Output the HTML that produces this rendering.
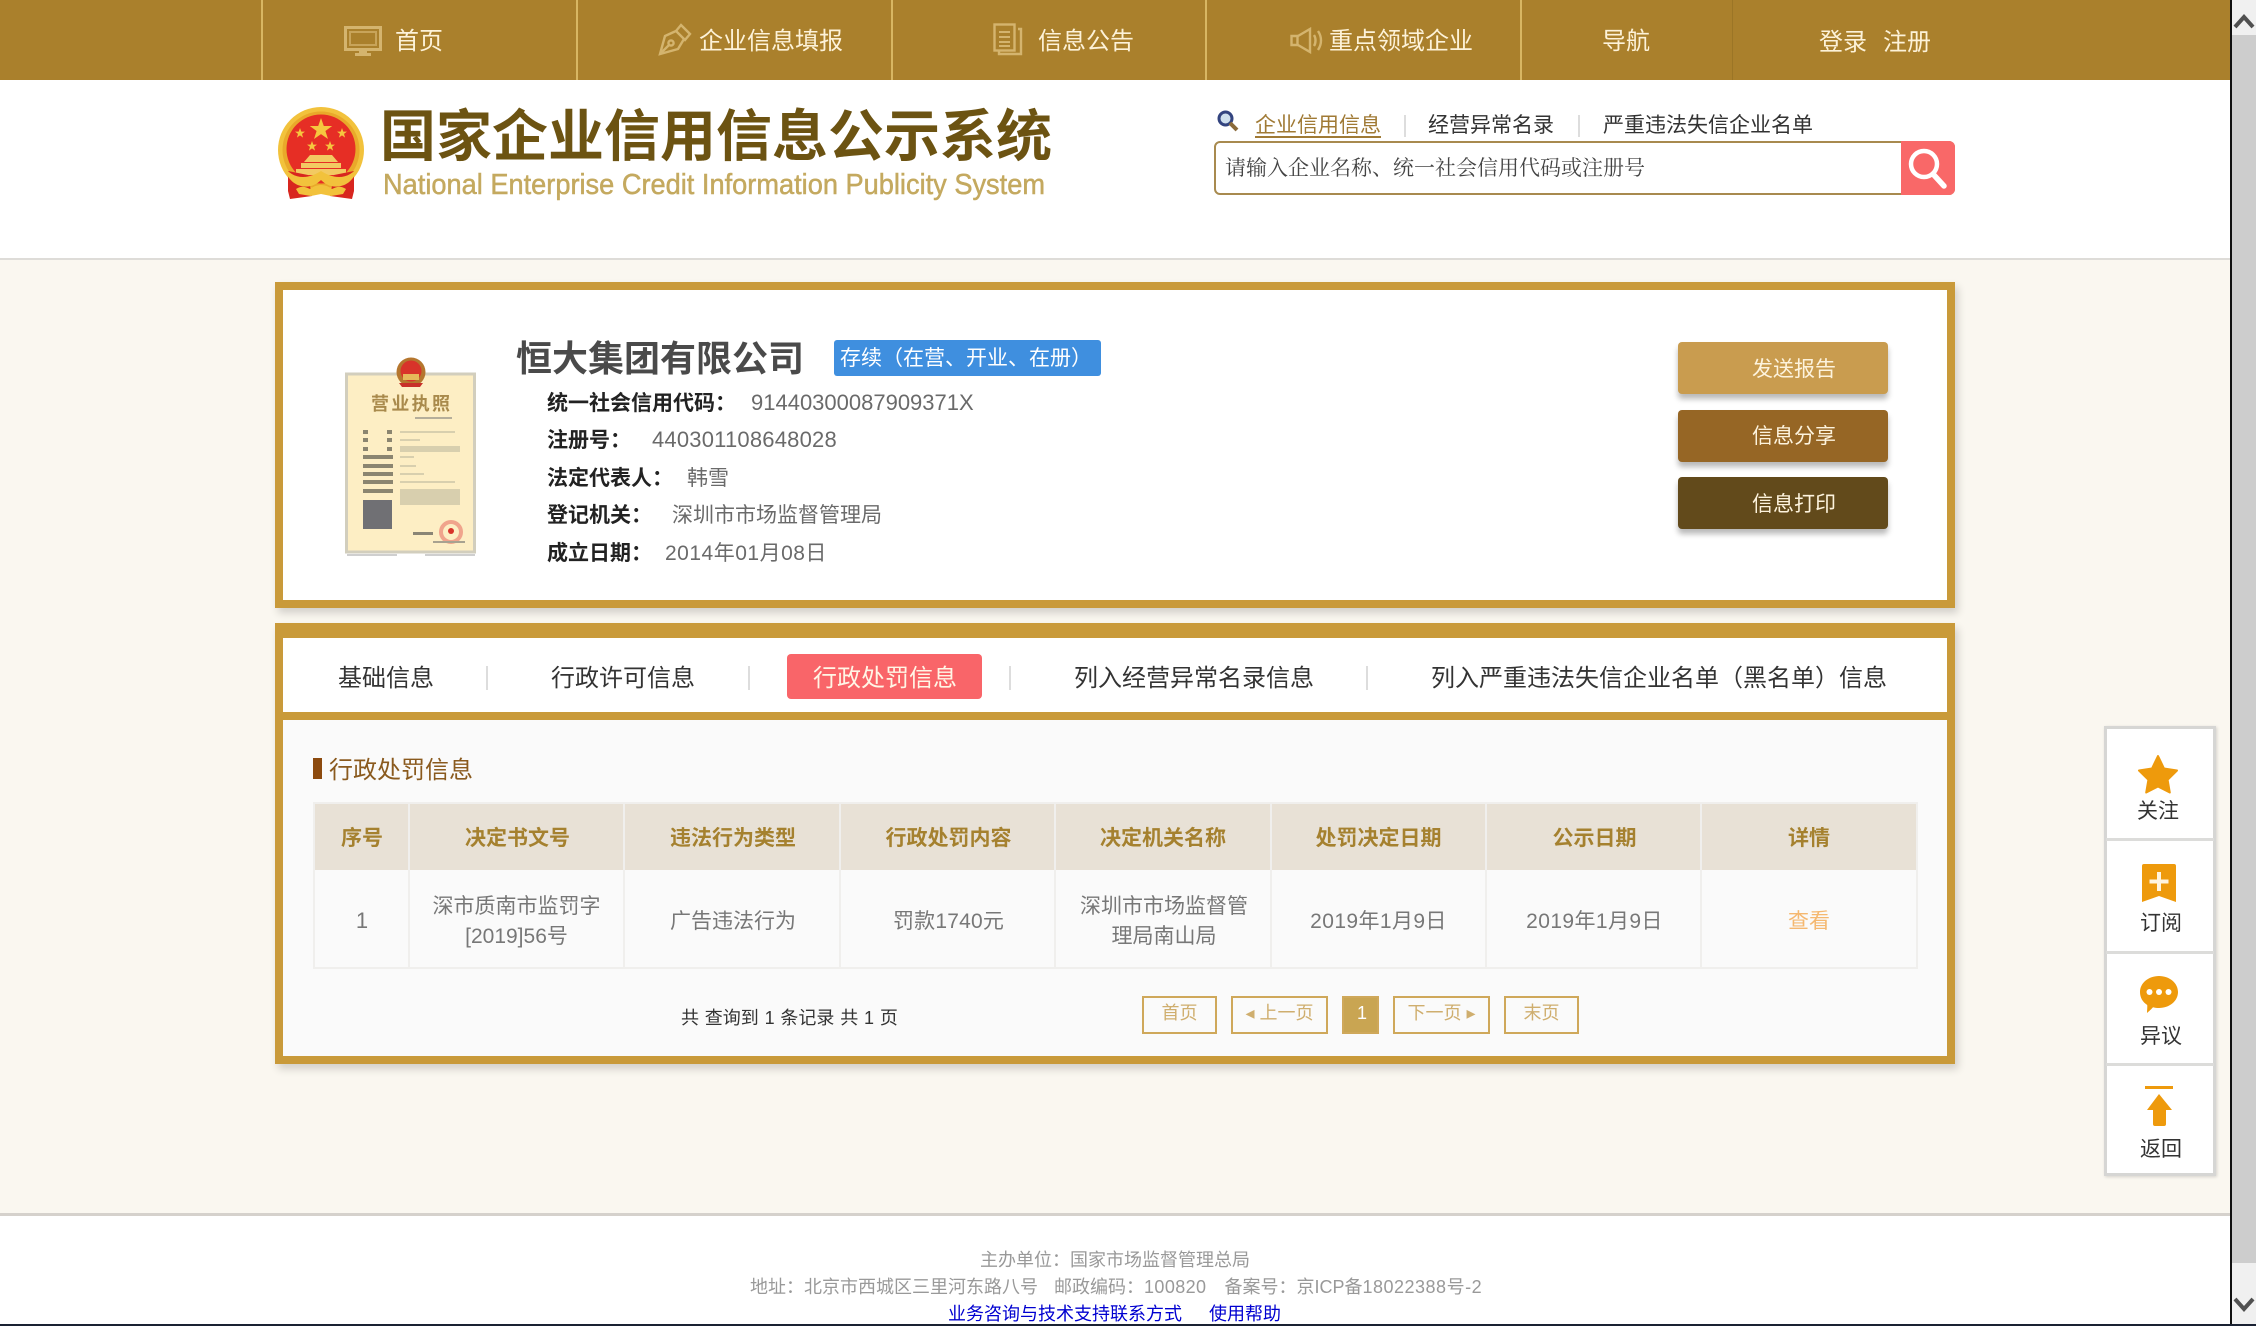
<!DOCTYPE html>
<html lang="zh-CN">
<head>
<meta charset="utf-8">
<title>国家企业信用信息公示系统</title>
<style>
html,body{margin:0;padding:0;width:2256px;height:1326px;overflow:hidden;background:#faf7f0}
body{position:relative;font-family:"Liberation Sans","Noto Sans CJK SC",sans-serif;color:#333}
div,span,svg,a{box-sizing:border-box}
.a{position:absolute}
.t{position:absolute;white-space:nowrap;line-height:1}
.c{position:absolute;text-align:center;white-space:nowrap;line-height:1}
.v{background:#d8b662;position:absolute;top:0;width:2px;height:80px}
.s{position:absolute;background:#ddd;width:2px}
.lb{font-weight:700;color:#222;font-size:21px}
.val{color:#6a6a6a;font-size:21px}
.num{font-size:22px}
.th{font-weight:700;color:#a5812f;font-size:21px}
.td{color:#777;font-size:21px}
.cell{position:absolute;background:#e8e1d6;top:804px;height:66px}
.cellb{position:absolute;top:870px;height:98px;border-left:2px solid #f0efed}
.pg{position:absolute;top:996px;height:38px;border:2px solid #cfa85a;color:#cfae6e;font-size:18px;text-align:center;line-height:30px;white-space:nowrap}
.btn{position:absolute;left:1678px;width:210px;height:52px;border-radius:4px;box-shadow:0 5px 6px rgba(0,0,0,.28)}
.btn span{position:absolute;left:74px;top:16px;font-size:21px;line-height:21px;color:#fdf3dd;white-space:nowrap}
</style>
</head>
<body>

<!-- nav -->
<div class="a" style="left:0;top:0;width:2231px;height:80px;background:#aa802c"></div>
<div class="v" style="left:261px"></div>
<div class="v" style="left:576px"></div>
<div class="v" style="left:891px"></div>
<div class="v" style="left:1205px"></div>
<div class="v" style="left:1520px"></div>
<div class="v" style="left:1732px;background:#9b7526;width:1px"></div>

<svg class="a" style="left:344px;top:26px" width="38" height="31" viewBox="0 0 38 31" fill="none"><rect x="1.500" y="1.500" width="35" height="22" fill="none" stroke="#d4b46e" stroke-width="3"/><rect x="6" y="6" width="26" height="13" fill="none" stroke="#d4b46e" stroke-width="2" opacity=".7"/><rect x="15" y="24" width="8" height="3" fill="#d4b46e"/><rect x="11" y="27" width="16" height="3" fill="#d4b46e"/></svg>
<svg class="a" style="left:658px;top:23px" width="34" height="33" viewBox="0 0 34 33" fill="none" stroke="#d4b46e" stroke-width="2.400"><path d="M23 2l9 9-5 6-9-9z"/><path d="M18 8L7 13 2 31l18-5 6-10"/><path d="M2 31l9-9"/><circle cx="13" cy="20" r="2.600"/></svg>
<svg class="a" style="left:993px;top:23px" width="30" height="33" viewBox="0 0 30 33" fill="none" stroke="#d4b46e" stroke-width="2.400"><rect x="1.500" y="1.500" width="20" height="26"/><path d="M25 6h3v25H6v-3"/><path d="M6 9h11M6 14h11M6 19h11M6 23h11" stroke-width="2"/></svg>
<svg class="a" style="left:1290px;top:27px" width="34" height="27" viewBox="0 0 34 27" fill="none" stroke="#d4b46e" stroke-width="2.400"><path d="M1.500 9h6v9h-6z"/><path d="M8 9l12-7v23L8 18"/><path d="M24 8c2 3 2 8 0 11M28 4c4 6 4 13 0 19" /></svg>

<div class="t" style="left:395px;top:30px;font-size:24px;color:#fdf2d8">首页</div>
<div class="t" style="left:699px;top:30px;font-size:24px;color:#fdf2d8">企业信息填报</div>
<div class="t" style="left:1038px;top:30px;font-size:24px;color:#fdf2d8">信息公告</div>
<div class="t" style="left:1329px;top:30px;font-size:24px;color:#fdf2d8">重点领域企业</div>
<div class="t" style="left:1602px;top:30px;font-size:24px;color:#fdf2d8">导航</div>
<div class="t" style="left:1819px;top:31px;font-size:24px;color:#fdf2d8">登录</div>
<div class="t" style="left:1883px;top:31px;font-size:24px;color:#fdf2d8">注册</div>

<!-- header -->
<div class="a" style="left:0;top:80px;width:2231px;height:178px;background:#fff"></div>
<div class="a" style="left:0;top:258px;width:2231px;height:2px;background:#dedcd8"></div>

<!-- emblem -->
<svg class="a" style="left:276px;top:105px" width="92" height="96" viewBox="0 0 92 96">
  <circle cx="45" cy="45" r="43" fill="#f2c23c"/>
  <circle cx="45" cy="45" r="38.500" fill="#e9a92a"/>
  <circle cx="45" cy="44" r="34.500" fill="#e62e25"/>
  <path d="M45 13l2.800 8h8.400l-6.800 5 2.600 8-7-4.900-7 4.900 2.600-8-6.800-5h8.400z" fill="#f6c63f"/>
  <path d="M24 23l1.300 3.600h3.700l-3 2.300 1.100 3.700-3.100-2.200-3.100 2.200 1.100-3.700-3-2.300h3.700zM66 23l1.300 3.600h3.700l-3 2.300 1.100 3.700-3.100-2.200-3.100 2.200 1.100-3.700-3-2.300h3.700zM36 36l1.300 3.600h3.700l-3 2.300 1.100 3.700-3.100-2.200-3.100 2.200 1.100-3.700-3-2.300h3.700zM54 36l1.300 3.600h3.700l-3 2.300 1.100 3.700-3.100-2.200-3.100 2.200 1.100-3.700-3-2.300h3.700z" fill="#f6c63f"/>
  <path d="M34 50h22l6 7H28zM25 58h40v5H25zM20 64h50v6H20z" fill="#f3ca62"/>
  <path d="M12 66l20 4 4 21-22 3-2-8z" fill="#d8261f"/>
  <path d="M78 66l-20 4-4 21 22 3 2-8z" fill="#d8261f"/>
  <path d="M7 60c5 8 12 12 20 12 7 0 13-3 18-6 5 3 11 6 18 6 8 0 15-4 20-12-3 11-9 19-18 21-8 2-15-1-20-6-5 5-12 8-20 6-9-2-15-10-18-21z" fill="#f2c23c"/>
  <path d="M20 84c6-4 10-2 14 0 4-3 8-4 11-4s7 1 11 4c4-2 8-4 14 0l-3 5-12 2-10-2-10 2-12-2z" fill="#f2c23c"/>
</svg>

<div class="t" style="left:380px;top:109px;font-size:56px;font-weight:700;color:#6c5312">国家企业信用信息公示系统</div>
<svg class="a" style="left:383px;top:166px" width="670" height="40"><text x="0" y="28" textLength="662" lengthAdjust="spacingAndGlyphs" font-family="Liberation Sans" font-size="29" fill="#c4a95f" stroke="#c4a95f" stroke-width=".5">National Enterprise Credit Information Publicity System</text></svg>

<!-- search tabs -->
<svg class="a" style="left:1217px;top:110px" width="22" height="22" viewBox="0 0 22 22"><circle cx="8.500" cy="8.500" r="6.500" fill="#cfe0ee" stroke="#33447f" stroke-width="3"/><path d="M13 13l7 7" stroke="#8a6a3a" stroke-width="4"/></svg>
<div class="t" style="left:1255px;top:115px;font-size:21px;color:#a07a35;padding-bottom:1px;border-bottom:2px solid #a07a35;height:23px">企业信用信息</div>
<div class="s" style="left:1404px;top:115px;height:22px"></div>
<div class="t" style="left:1428px;top:115px;font-size:21px;color:#333">经营异常名录</div>
<div class="s" style="left:1578px;top:115px;height:22px"></div>
<div class="t" style="left:1603px;top:115px;font-size:21px;color:#333">严重违法失信企业名单</div>

<!-- search box -->
<div class="a" style="left:1214px;top:141px;width:741px;height:54px;border:2px solid #a88a4f;border-radius:6px;background:#fff"></div>
<div class="t" style="left:1225px;top:158px;font-size:21px;color:#444;font-family:'Liberation Serif','Noto Serif CJK SC',serif">请输入企业名称、统一社会信用代码或注册号</div>
<div class="a" style="left:1901px;top:141px;width:54px;height:54px;background:#f96868;border-radius:0 6px 6px 0"></div>
<svg class="a" style="left:1904px;top:145px" width="46" height="46" viewBox="0 0 46 46" fill="none" stroke="#fff"><circle cx="20" cy="19" r="13" stroke-width="4.500"/><path d="M29 29l11 12" stroke-width="5.500" stroke-linecap="round"/></svg>

<!-- card 1 -->
<div class="a" style="left:275px;top:282px;width:1680px;height:326px;background:#fff;border:8px solid #c99a3a;box-shadow:3px 5px 8px rgba(0,0,0,.16)"></div>

<!-- licence -->
<svg class="a" style="left:345px;top:355px" width="132" height="205" viewBox="0 0 132 205">
  <rect x="1.500" y="19" width="128" height="178" fill="#fdeec4" stroke="#d2cebd" stroke-width="3"/>
  <circle cx="66" cy="17" r="14.500" fill="#b5762e"/>
  <circle cx="66" cy="16" r="10.500" fill="#d8332a"/>
  <rect x="58" y="19" width="16" height="6" fill="#e6b85a"/>
  <path d="M54 28h24l-3 4H57z" fill="#c8302a"/>
  <text x="26" y="55" font-family="Noto Sans CJK SC" font-weight="700" font-size="18" fill="#a98a4c" textLength="79">营业执照</text>
  <rect x="70" y="62" width="37" height="2" fill="#b5ae9a"/>
  <g fill="#8b8570">
    <rect x="18" y="75" width="5" height="4"/><rect x="42" y="75" width="5" height="4"/>
    <rect x="18" y="83" width="5" height="4"/><rect x="42" y="83" width="5" height="4"/>
    <rect x="18" y="92" width="5" height="4"/><rect x="42" y="92" width="5" height="4"/>
    <rect x="18" y="100" width="30" height="4"/>
    <rect x="18" y="109" width="30" height="4"/>
    <rect x="18" y="117" width="30" height="4"/>
    <rect x="18" y="125" width="30" height="4"/>
    <rect x="18" y="134" width="30" height="4"/>
  </g>
  <g fill="#d8cfae">
    <rect x="55" y="76" width="55" height="2"/><rect x="55" y="84" width="20" height="2"/><rect x="55" y="91" width="60" height="6"/>
    <rect x="55" y="101" width="14" height="2"/><rect x="55" y="110" width="16" height="2"/><rect x="55" y="118" width="24" height="2"/>
    <rect x="55" y="126" width="55" height="2"/><rect x="55" y="134" width="60" height="16"/>
  </g>
  <rect x="18" y="145" width="29" height="29" fill="#707074"/>
  <circle cx="106" cy="177" r="10" fill="none" stroke="#f0a48c" stroke-width="4"/>
  <circle cx="106" cy="176" r="3" fill="#d8332a"/>
  <rect x="68" y="177" width="20" height="3" fill="#8a8575"/>
  <rect x="88" y="186" width="32" height="2" fill="#a8a290"/>
  <rect x="2" y="199" width="50" height="2" fill="#cfcfcf"/>
  <rect x="80" y="199" width="50" height="2" fill="#cfcfcf"/>
</svg>

<!-- company -->
<div class="t" style="left:516px;top:341px;font-size:36px;font-weight:700;color:#4a4a4a">恒大集团有限公司</div>
<div class="a" style="left:834px;top:340px;width:267px;height:36px;background:#3f8fdf;border-radius:3px"></div>
<div class="t" style="left:840px;top:348px;font-size:21px;color:#fff">存续（在营、开业、在册）</div>

<div class="t lb" style="left:547px;top:393px">统一社会信用代码：</div>
<div class="t val num" style="left:751px;top:392px">91440300087909371X</div>
<div class="t lb" style="left:547px;top:430px">注册号：</div>
<div class="t val num" style="left:652px;top:429px;letter-spacing:.2px">440301108648028</div>
<div class="t lb" style="left:547px;top:468px">法定代表人：</div>
<div class="t val" style="left:687px;top:468px">韩雪</div>
<div class="t lb" style="left:547px;top:505px">登记机关：</div>
<div class="t val" style="left:672px;top:505px">深圳市市场监督管理局</div>
<div class="t lb" style="left:547px;top:543px">成立日期：</div>
<div class="t val" style="left:665px;top:543px;letter-spacing:.5px">2014年01月08日</div>

<!-- buttons -->
<div class="btn" style="top:342px;background:#c99c4f"><span style="top:17px">发送报告</span></div>
<div class="btn" style="top:410px;background:#966625"><span>信息分享</span></div>
<div class="btn" style="top:477px;background:#624a1b"><span style="top:17px">信息打印</span></div>

<!-- card 2 -->
<div class="a" style="left:275px;top:623px;width:1680px;height:441px;background:#c99a3a;box-shadow:3px 5px 8px rgba(0,0,0,.16)"></div>
<div class="a" style="left:283px;top:638px;width:1664px;height:74px;background:#fff"></div>
<div class="a" style="left:283px;top:720px;width:1664px;height:336px;background:#fafafa"></div>

<!-- tabs -->
<div class="t" style="left:338px;top:667px;font-size:24px;color:#333">基础信息</div>
<div class="s" style="left:486px;top:666px;height:24px"></div>
<div class="t" style="left:551px;top:667px;font-size:24px;color:#333">行政许可信息</div>
<div class="s" style="left:748px;top:666px;height:24px"></div>
<div class="a" style="left:787px;top:654px;width:195px;height:45px;background:#f96569;border-radius:4px"></div>
<div class="t" style="left:813px;top:667px;font-size:24px;color:#fff6e6">行政处罚信息</div>
<div class="s" style="left:1009px;top:666px;height:24px"></div>
<div class="t" style="left:1074px;top:667px;font-size:24px;color:#333">列入经营异常名录信息</div>
<div class="s" style="left:1366px;top:666px;height:24px"></div>
<div class="t" style="left:1431px;top:667px;font-size:24px;color:#333">列入严重违法失信企业名单（黑名单）信息</div>

<!-- section title -->
<div class="a" style="left:313px;top:758px;width:9px;height:21px;background:#8c4a0e"></div>
<div class="t" style="left:329px;top:759px;font-size:24px;color:#8a5a1e">行政处罚信息</div>

<!-- table -->
<div class="a" style="left:313px;top:802px;width:1605px;height:167px;background:#f0efed"></div>
<div class="a" style="left:315px;top:870px;width:1601px;height:97px;background:#fafafa"></div>
<div class="cell" style="left:315px;width:93px"></div>
<div class="cell" style="left:410px;width:213px"></div>
<div class="cell" style="left:625px;width:214px"></div>
<div class="cell" style="left:841px;width:213px"></div>
<div class="cell" style="left:1056px;width:214px"></div>
<div class="cell" style="left:1272px;width:213px"></div>
<div class="cell" style="left:1487px;width:213px"></div>
<div class="cell" style="left:1702px;width:214px"></div>
<div class="cellb" style="left:408px"></div>
<div class="cellb" style="left:623px"></div>
<div class="cellb" style="left:839px"></div>
<div class="cellb" style="left:1054px"></div>
<div class="cellb" style="left:1270px"></div>
<div class="cellb" style="left:1485px"></div>
<div class="cellb" style="left:1700px"></div>

<div class="c th" style="left:315px;width:94px;top:828px">序号</div>
<div class="c th" style="left:411px;width:213px;top:828px">决定书文号</div>
<div class="c th" style="left:626px;width:214px;top:828px">违法行为类型</div>
<div class="c th" style="left:842px;width:213px;top:828px">行政处罚内容</div>
<div class="c th" style="left:1056px;width:214px;top:828px">决定机关名称</div>
<div class="c th" style="left:1272px;width:213px;top:828px">处罚决定日期</div>
<div class="c th" style="left:1488px;width:213px;top:828px">公示日期</div>
<div class="c th" style="left:1703px;width:212px;top:828px">详情</div>

<div class="c td" style="left:315px;width:94px;top:910px;font-size:22px">1</div>
<div class="c td" style="left:410px;width:213px;top:896px">深市质南市监罚字</div>
<div class="c td" style="left:410px;width:213px;top:926px">[2019]56号</div>
<div class="c td" style="left:626px;width:214px;top:911px">广告违法行为</div>
<div class="c td" style="left:842px;width:213px;top:911px;letter-spacing:.2px">罚款1740元</div>
<div class="c td" style="left:1057px;width:214px;top:896px">深圳市市场监督管</div>
<div class="c td" style="left:1057px;width:214px;top:926px">理局南山局</div>
<div class="c td" style="left:1272px;width:213px;top:911px;letter-spacing:.4px">2019年1月9日</div>
<div class="c td" style="left:1488px;width:213px;top:911px;letter-spacing:.4px">2019年1月9日</div>
<div class="c td" style="left:1703px;width:212px;top:911px;color:#f5b870">查看</div>

<!-- pagination -->
<div class="t" style="left:681px;top:1009px;font-size:18px;color:#333;word-spacing:.8px">共 查询到 1 条记录 共 1 页</div>
<div class="pg" style="left:1142px;width:75px">首页</div>
<div class="pg" style="left:1231px;width:97px">&#9666; 上一页</div>
<div class="pg" style="left:1342px;width:37px;background:#c9a552;color:#fff;padding-left:3px">1</div>
<div class="pg" style="left:1393px;width:97px">下一页 &#9656;</div>
<div class="pg" style="left:1504px;width:75px">末页</div>

<!-- side panel -->
<div class="a" style="left:2104px;top:726px;width:112px;height:450px;background:#fff;border:3px solid #d6d6d4;box-shadow:1px 1px 3px rgba(0,0,0,.15)"></div>
<div class="a" style="left:2106px;top:838px;width:108px;height:3px;background:#dcdcda"></div>
<div class="a" style="left:2106px;top:951px;width:108px;height:3px;background:#dcdcda"></div>
<div class="a" style="left:2106px;top:1063px;width:108px;height:3px;background:#dcdcda"></div>

<svg class="a" style="left:2137px;top:754px" width="42" height="40" viewBox="0 0 42 40"><path d="M21 2l6 12.500 13 2-9.400 9.300 2.200 12.700L21 32.500 9.200 38.500l2.200-12.700L2 16.500l13-2z" fill="#ee9a0c" stroke="#ee9a0c" stroke-width="2" stroke-linejoin="round"/></svg>
<div class="t" style="left:2137px;top:801px;font-size:21px;color:#333">关注</div>

<svg class="a" style="left:2142px;top:864px" width="34" height="38" viewBox="0 0 34 38"><path d="M2 0h30a2 2 0 0 1 2 2v36l-17-6-17 6V2a2 2 0 0 1 2-2z" fill="#ee9a0c"/><path d="M17 8v19M7.500 17.500h19" stroke="#fff4df" stroke-width="4"/></svg>
<div class="t" style="left:2140px;top:913px;font-size:21px;color:#333">订阅</div>

<svg class="a" style="left:2139px;top:975px" width="40" height="39" viewBox="0 0 40 39"><path d="M20 1c10.500 0 19 7 19 16s-8.500 16-19 16c-2 0-4-.3-6-.8C11.500 35 9 37 8 38c0-3 .5-6 .2-8C3.600 27 1 22.500 1 17 1 8 9.500 1 20 1z" fill="#ee9a0c"/><circle cx="10.500" cy="17" r="3" fill="#fff"/><circle cx="20" cy="17" r="3" fill="#fff"/><circle cx="29.500" cy="17" r="3" fill="#fff"/></svg>
<div class="t" style="left:2140px;top:1026px;font-size:21px;color:#333">异议</div>

<svg class="a" style="left:2145px;top:1086px" width="30" height="42" viewBox="0 0 30 42"><rect x="0" y="0" width="28" height="3" fill="#ee9a0c"/><path d="M14 8l13 16h-6v14a2 2 0 0 1-2 2h-9a2 2 0 0 1-2-2V24H2z" fill="#ee9a0c"/></svg>
<div class="t" style="left:2140px;top:1139px;font-size:21px;color:#333">返回</div>

<!-- footer -->
<div class="a" style="left:0;top:1213px;width:2231px;height:113px;background:#fff;border-top:3px solid #d5d1cc"></div>
<div class="c" style="left:0;width:2230px;top:1251px;font-size:18px;color:#999">主办单位：国家市场监督管理总局</div>
<div class="t" style="left:750px;top:1278px;font-size:18px;color:#999">地址：北京市西城区三里河东路八号<span style="display:inline-block;width:16px"></span>邮政编码：<span style="letter-spacing:.4px">100820</span><span style="display:inline-block;width:18px"></span>备案号：京ICP备<span style="letter-spacing:.5px">18022388号-2</span></div>
<div class="t" style="left:948px;top:1305px;font-size:18px;color:#0000d0">业务咨询与技术支持联系方式</div>
<div class="t" style="left:1209px;top:1305px;font-size:18px;color:#0000d0">使用帮助</div>

<!-- scrollbar -->
<div class="a" style="left:2230px;top:0;width:2px;height:1326px;background:#111"></div>
<div class="a" style="left:2232px;top:0;width:24px;height:1326px;background:#f0f0f0"></div>
<div class="a" style="left:2232px;top:35px;width:24px;height:1228px;background:#cdcdcd"></div>
<svg class="a" style="left:2232px;top:12px" width="24" height="20" viewBox="0 0 24 20" fill="none"><path d="M3 15l9-10 9 10" stroke="#505050" stroke-width="4"/></svg>
<svg class="a" style="left:2232px;top:1294px" width="24" height="20" viewBox="0 0 24 20" fill="none"><path d="M3 5l9 10 9-10" stroke="#505050" stroke-width="4"/></svg>
<div class="a" style="left:0;top:1324px;width:2256px;height:2px;background:#1a2233"></div>
</body>
</html>
